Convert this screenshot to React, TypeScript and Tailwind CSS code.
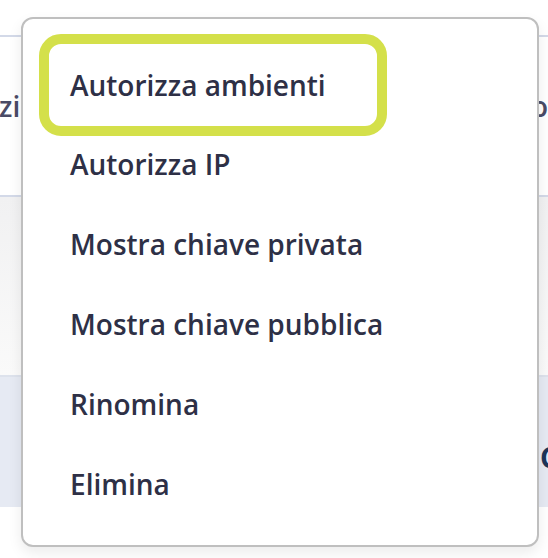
const items = [
  "Autorizza ambienti",
  "Autorizza IP",
  "Mostra chiave privata",
  "Mostra chiave pubblica",
  "Rinomina",
  "Elimina",
];

export default function App() {
  return (
    <div
      className="relative w-[548px] h-[558px] overflow-hidden bg-white"
      style={{ fontFamily: '"Open Sans", "Noto Sans", sans-serif' }}
    >
      {/* table behind the menu */}
      <div className="pt-[35px]">
        <div className="flex h-[162px] items-start justify-between border-t-2 border-b-2 border-[#d3d9e8] pt-[55px] text-[28px] font-semibold text-[#4a4b66]">
          <span className="-ml-[1px] leading-none">zione</span>
          <span className="leading-none">Creato</span>
        </div>
        <div className="h-[178px] bg-gradient-to-b from-[#f1f1f2] to-[#fafafa]" />
        <div className="flex h-[132px] items-start justify-end border-t-2 border-[#dde2ec] bg-[#e6eaf3] pt-[66px] text-[28px] font-bold text-[#1c3559]">
          <span className="-mr-[200px] w-[208px] leading-none">Creato</span>
        </div>
      </div>

      {/* dropdown menu */}
      <div className="absolute left-[21px] top-[17px] w-[518px] rounded-[12px] border-2 border-[#bfbfbf] bg-white pb-[21px] pt-[25px] shadow-[0_6px_14px_rgba(0,0,0,0.08)]">
        {items.map((label, i) => (
          <div
            key={label}
            className={
              i === 0
                ? "ml-[26px] mb-[-2px] flex h-[82px] w-[328px] items-center rounded-[12px] pl-[21px] text-[28px] font-semibold text-[#2e3046] outline outline-[10px] outline-[#d4e04a]"
                : "flex h-[80px] items-center pl-[47px] text-[28px] font-semibold text-[#2e3046]"
            }
          >
            {label}
          </div>
        ))}
      </div>
    </div>
  );
}
